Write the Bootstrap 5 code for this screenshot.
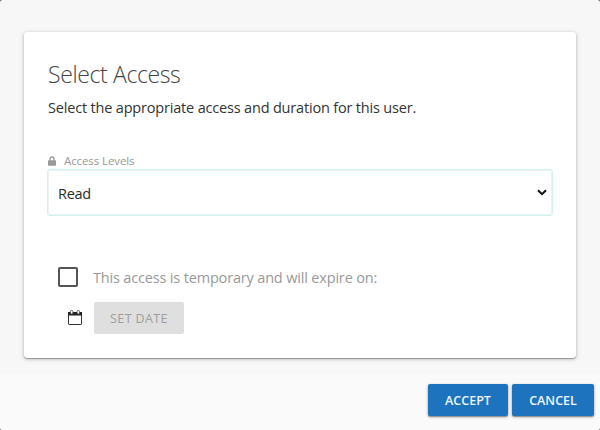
<!DOCTYPE html>
<html lang="en">
<head>
<meta charset="utf-8">
<meta name="viewport" content="width=device-width, initial-scale=1">
<title>Select Access</title>
<link href="https://cdn.jsdelivr.net/npm/bootstrap@5.3.0/dist/css/bootstrap.min.css" rel="stylesheet">
<style>
html { background: #777; }
body { font-family: "Segoe UI", "Open Sans", "Noto Sans", sans-serif; background: transparent; color: #333; font-size: 14.5px; }
.dialog { height: 430px; background: #f7f7f7; border-radius: 3px; overflow: hidden; }
.dialog-body { height: 374px; padding: 32px 24px 0; }
.access-card { height: 326px; border: 0; border-radius: 3px; padding: 26px 24px 0; box-shadow: 0 1px 4px rgba(0,0,0,.25), 0 1px 1px rgba(0,0,0,.3); }
.access-title { font-size: 23px; font-weight: 300; line-height: 32px; letter-spacing: -.38px; color: #444; }
.access-intro { font-size: 14.5px; line-height: 20px; letter-spacing: -.18px; margin-top: 8px; }
.access-label { font-size: 11.5px; line-height: 14px; color: #999; gap: 8px; margin-top: 36px; letter-spacing: -.1px; }
.access-select { height: 47px; margin: 1px 0 0 -1px; width: 506px; border: 1px solid #cdf4ee; box-shadow: inset 0 0 0 1px #eef3f2; border-radius: 3px; padding: 2px 30px 0 10px; font-size: 14.5px; letter-spacing: -.3px; color: #2b2b2b;
  background-image: url("data:image/svg+xml,%3Csvg xmlns='http://www.w3.org/2000/svg' viewBox='0 0 10 7'%3E%3Cpath d='M1 1.2l4 4 4-4' fill='none' stroke='%23111' stroke-width='2'/%3E%3C/svg%3E"); background-size: 10px 7px; background-position: right 5px top 19px; }
.access-check { gap: 15px; margin: 51px 0 0 10px; height: 20px; color: #999; }
.access-check .form-check-input { width: 20px; height: 20px; border: 2px solid #555; border-radius: 2px; }
.access-check label { letter-spacing: -.17px; padding-top: 2px; }
.date-row { gap: 12px; margin: 15px 0 0 20px; }
.date-row svg { margin-top: -1px; }
.btn-date, .btn-date:disabled { width: 90px; height: 32px; padding: 2px 0 0; font-size: 12.5px; letter-spacing: .4px; border: 0; border-radius: 2px; background: #dfdfdf; color: #9e9e9e; opacity: 1; }
.dialog-actions { height: 56px; background: #fafafa; padding: 10px 6px 0; gap: 4px; }
.btn-action { height: 32px; padding: 2px 0 0; font-size: 12.5px; font-weight: 600; border: 0; border-radius: 2px; background: #1e73be; color: #eef6ff; box-shadow: 0 1px 3px rgba(0,0,0,.35), 0 1px 1px rgba(0,0,0,.25); }
.btn-accept { width: 80px; }
.btn-cancel { width: 82px; }
</style>
</head>
<body>
<main class="dialog">
  <div class="dialog-body">
    <section class="card access-card">
      <h1 class="access-title mb-0">Select Access</h1>
      <p class="access-intro mb-0">Select the appropriate access and duration for this user.</p>
      <label class="access-label d-flex align-items-center" for="level">
        <svg width="8" height="10" viewBox="0 0 8 10"><path d="M2 5V3a2 2 0 0 1 4 0v2" fill="none" stroke="#999" stroke-width="1.3"/><rect y="4.3" width="8" height="5.5" rx=".7" fill="#999"/></svg>
        <span>Access Levels</span>
      </label>
      <select class="form-select access-select" id="level"><option>Read</option></select>
      <div class="access-check d-flex align-items-center">
        <input class="form-check-input m-0" type="checkbox" id="temp">
        <label for="temp">This access is temporary and will expire on:</label>
      </div>
      <div class="date-row d-flex align-items-center">
        <svg width="14" height="15" viewBox="0 0 14 15"><rect x=".5" y="2.5" width="13" height="12" rx=".6" fill="#fff" stroke="#333" stroke-width="1"/><path d="M0 2h14v3.5H0z" fill="#222"/><rect x="2.5" y=".5" width="2.4" height="3.6" rx="1" fill="#fff" stroke="#444" stroke-width=".8"/><rect x="9.1" y=".5" width="2.4" height="3.6" rx="1" fill="#fff" stroke="#444" stroke-width=".8"/></svg>
        <button class="btn btn-date" type="button" disabled>SET DATE</button>
      </div>
    </section>
  </div>
  <footer class="dialog-actions d-flex justify-content-end">
    <button class="btn btn-action btn-accept" type="button">ACCEPT</button>
    <button class="btn btn-action btn-cancel" type="button">CANCEL</button>
  </footer>
</main>
<script src="https://cdn.jsdelivr.net/npm/bootstrap@5.3.0/dist/js/bootstrap.bundle.min.js"></script>
</body>
</html>
